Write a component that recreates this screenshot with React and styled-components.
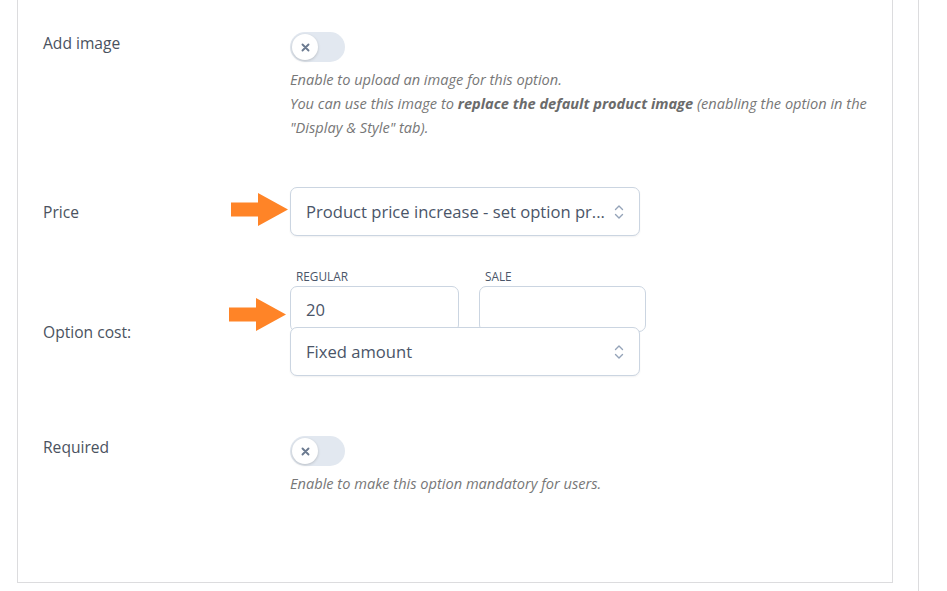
import React from "react";
import styled, { createGlobalStyle } from "styled-components";

const Global = createGlobalStyle`
  html, body { margin: 0; padding: 0; background: #ffffff; }
  body { font-family: "Open Sans", "Liberation Sans", sans-serif; }
  * { box-sizing: border-box; }
`;

const Page = styled.div`
  display: flex;
  align-items: stretch;
  height: 591px;
  overflow: hidden;
`;

const Card = styled.div`
  margin-left: 17px;
  margin-top: -1px;
  width: 876px;
  height: 584px;
  border: 1px solid #dcdcde;
  padding: 32px 0 0 25px;
  display: flex;
  flex-direction: column;
`;

const Divider = styled.div`
  margin-left: 25px;
  width: 1px;
  background: #dcdcde;
`;

const Row = styled.div`
  display: flex;
  align-items: ${(p) => p.$align || "flex-start"};
  margin-top: ${(p) => p.$top || 0}px;
`;

const Label = styled.div`
  width: 247px;
  flex: none;
  font-size: 15.6px;
  line-height: 24px;
  color: #4a5260;
  margin-top: ${(p) => p.$offset || 0}px;
`;

const Control = styled.div`
  position: relative;
  display: flex;
  flex-direction: column;
`;

const Toggle = styled.div`
  width: 55px;
  height: 30px;
  border-radius: 15px;
  background: #e2e8f0;
  display: flex;
  align-items: center;
  padding-left: 2px;
`;

const Knob = styled.div`
  width: 26px;
  height: 26px;
  border-radius: 50%;
  background: #fff;
  box-shadow: 0 1px 3px rgba(0, 0, 0, 0.18);
  display: flex;
  align-items: center;
  justify-content: center;
`;

const Desc = styled.div`
  margin-top: 5px;
  font-size: 14.6px;
  font-style: italic;
  line-height: 24px;
  color: #777;
  width: 600px;
  white-space: nowrap;
  b { font-weight: 700; color: #6b6b6b; }
`;

const Select = styled.div`
  width: 350px;
  height: 49px;
  border: 1px solid #cbd5e1;
  border-radius: 7px;
  background: #fff;
  box-shadow: 0 1px 2px rgba(15, 23, 42, 0.06);
  display: flex;
  align-items: center;
  justify-content: space-between;
  padding: 0 15px 0 15px;
  font-size: 16.6px;
  color: #4a5568;
  position: relative;
  margin-top: ${(p) => p.$overlap || 0}px;
`;

const Fields = styled.div`
  display: flex;
  gap: 20px;
`;

const Field = styled.div`
  display: flex;
  flex-direction: column;
  width: ${(p) => p.$w}px;
`;

const SubLabel = styled.div`
  font-size: 11.8px;
  line-height: 16px;
  text-transform: uppercase;
  color: #4a5568;
  padding-left: 6px;
  margin-bottom: 2px;
`;

const Input = styled.div`
  height: 46px;
  border: 1px solid #cbd5e1;
  border-radius: 7px;
  background: #fff;
  display: flex;
  align-items: center;
  padding-left: 15px;
  font-size: 16.6px;
  color: #4a5568;
`;

const Arrow = styled.svg`
  position: absolute;
  left: ${(p) => p.$left}px;
  top: ${(p) => p.$top}px;
`;

const Chevrons = () => (
  <svg width="10" height="16" viewBox="0 0 10 16" fill="none" stroke="#94a3b8" strokeWidth="1.4" strokeLinecap="round" strokeLinejoin="round">
    <path d="M1.5 5.5 L5 2 L8.5 5.5" />
    <path d="M1.5 10.5 L5 14 L8.5 10.5" />
  </svg>
);

const XIcon = () => (
  <svg width="9" height="9" viewBox="0 0 9 9" stroke="#6b7a90" strokeWidth="1.9" strokeLinecap="round">
    <path d="M1.5 1.5 L7.5 7.5 M7.5 1.5 L1.5 7.5" />
  </svg>
);

const OrangeArrow = ({ left, top }) => (
  <Arrow $left={left} $top={top} width="57" height="33" viewBox="0 0 57 33">
    <path d="M0 9.5 H27 V0 L57 16.5 L27 33 V23.5 H0 Z" fill="#ff8427" />
  </Arrow>
);

export default function App() {
  return (
    <>
      <Global />
      <Page>
        <Card>
          <Row>
            <Label $offset={-1}>Add image</Label>
            <Control>
              <Toggle>
                <Knob><XIcon /></Knob>
              </Toggle>
              <Desc>
                Enable to upload an image for this option.
                <br />
                You can use this image to <b>replace the default product image</b> (enabling the option in the
                <br />
                "Display &amp; Style" tab).
              </Desc>
            </Control>
          </Row>

          <Row $align="center" $top={48}>
            <Label>Price</Label>
            <Control>
              <OrangeArrow left={-59} top={6} />
              <Select>
                <span>Product price increase - set option pr...</span>
                <Chevrons />
              </Select>
            </Control>
          </Row>

          <Row $top={32}>
            <Label $offset={52}>Option cost:</Label>
            <Control>
              <OrangeArrow left={-61} top={30} />
              <Fields>
                <Field $w={169}>
                  <SubLabel>Regular</SubLabel>
                  <Input>20</Input>
                </Field>
                <Field $w={167}>
                  <SubLabel>Sale</SubLabel>
                  <Input />
                </Field>
              </Fields>
              <Select $overlap={-5}>
                <span>Fixed amount</span>
                <Chevrons />
              </Select>
            </Control>
          </Row>

          <Row $top={60}>
            <Label $offset={-1}>Required</Label>
            <Control>
              <Toggle>
                <Knob><XIcon /></Knob>
              </Toggle>
              <Desc>Enable to make this option mandatory for users.</Desc>
            </Control>
          </Row>
        </Card>
        <Divider />
      </Page>
    </>
  );
}
